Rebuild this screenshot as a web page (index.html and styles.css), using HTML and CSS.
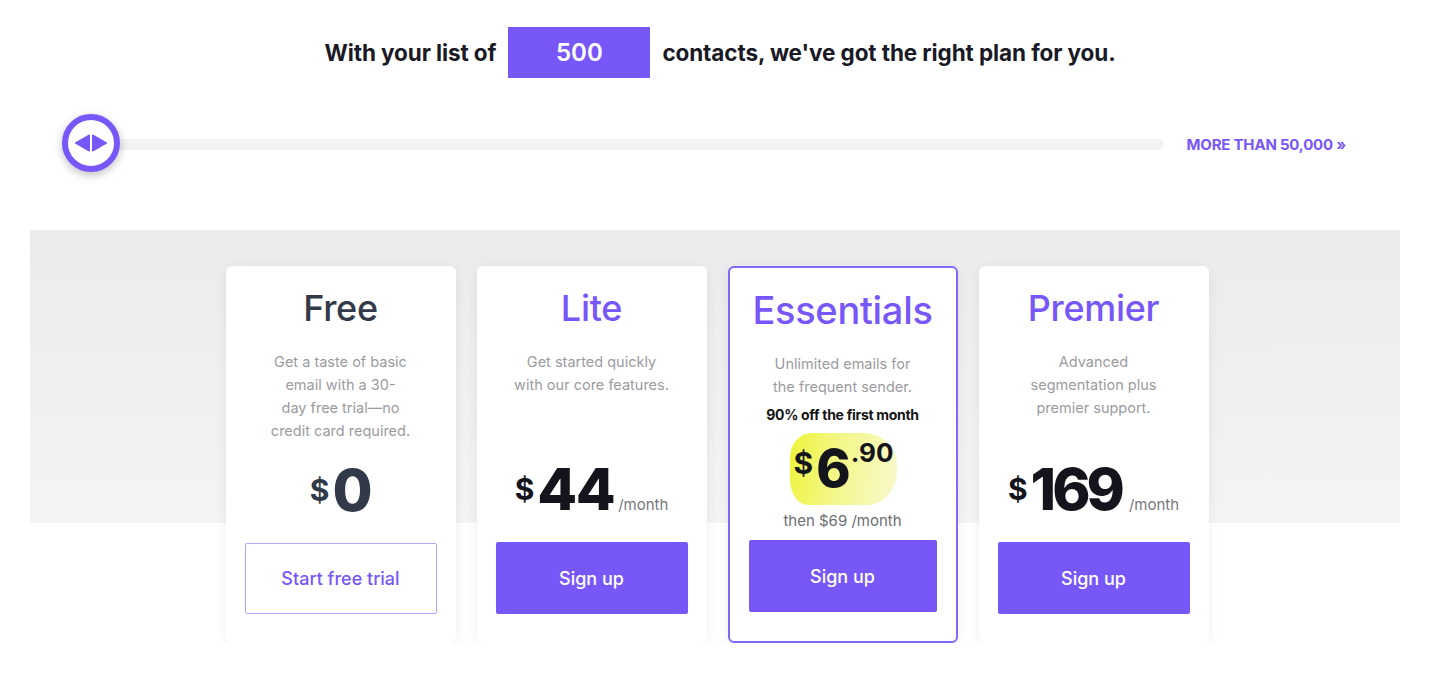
FILE: index.html
```html
<!DOCTYPE html>
<html lang="en">
<head>
    <meta charset="UTF-8">
    <meta name="viewport" content="width=device-width, initial-scale=1.0">
    <title>Pricing | Plans</title>
    <link rel="stylesheet" href="styles.css">
</head>
<body>
    <div class="picker">
        <h1 class="contacts">
            <span>With your list of</span>
            <span class="count">500</span>
            <span>contacts, we've got the right plan for you.</span>
        </h1>
        <div class="slider">
            <div class="knob">
                <svg width="46" height="46" viewBox="0 0 46 46">
                    <path d="M8 23 L21 15.5 L21 30.5 Z" fill="#7857f8" stroke="#7857f8" stroke-width="2" stroke-linejoin="round"/>
                    <path d="M25 15.5 L38 23 L25 30.5 Z" fill="#7857f8" stroke="#7857f8" stroke-width="2" stroke-linejoin="round"/>
                </svg>
            </div>
            <div class="track"></div>
            <a href="#" class="more">MORE THAN 50,000 &raquo;</a>
        </div>
    </div>

    <section class="plans">
        <div class="plan-row">
            <div class="plan">
                <h2 class="plan-name free">Free</h2>
                <p class="plan-desc">Get a taste of basic<br>email with a 30-<br>day free trial—no<br>credit card required.</p>
                <div class="price">
                    <span class="cur">$</span><span class="amount">0</span>
                </div>
                <a href="#" class="btn btn-outline">Start free trial</a>
            </div>
            <div class="plan">
                <h2 class="plan-name">Lite</h2>
                <p class="plan-desc">Get started quickly<br>with our core features.</p>
                <div class="price">
                    <span class="cur">$</span><span class="amount">44</span><span class="per">/month</span>
                </div>
                <a href="#" class="btn">Sign up</a>
            </div>
            <div class="plan featured">
                <h2 class="plan-name">Essentials</h2>
                <p class="plan-desc">Unlimited emails for<br>the frequent sender.</p>
                <p class="promo">90% off the first month</p>
                <div class="promo-price">
                    <span class="blob"><span class="cur">$</span><span class="amount">6</span><span class="cents">.90</span></span>
                </div>
                <p class="then">then $69 /month</p>
                <a href="#" class="btn">Sign up</a>
            </div>
            <div class="plan">
                <h2 class="plan-name">Premier</h2>
                <p class="plan-desc">Advanced<br>segmentation plus<br>premier support.</p>
                <div class="price">
                    <span class="cur">$</span><span class="amount tight">169</span><span class="per">/month</span>
                </div>
                <a href="#" class="btn">Sign up</a>
            </div>
        </div>
    </section>
</body>
</html>
```

FILE: styles.css
```css
body {
    margin: 0;
    font-family: Inter, 'Noto Sans', Arial, sans-serif;
    background: #fff;
    color: #111;
}
.picker {
    padding-top: 27px;
}
.contacts {
    margin: 0;
    display: flex;
    justify-content: center;
    align-items: center;
    gap: 12px;
    font-size: 22.5px;
    font-weight: 700;
    letter-spacing: -0.1px;
    color: #1a1a26;
}
.count {
    width: 142px;
    height: 51px;
    background: #7857f8;
    color: #fff;
    font-size: 24px;
    font-weight: 600;
    display: flex;
    align-items: center;
    justify-content: center;
    letter-spacing: 0;
}
.slider {
    display: flex;
    align-items: center;
    margin-top: 36px;
    padding: 0 94px 0 62px;
}
.knob {
    width: 46px;
    height: 46px;
    border: 6px solid #7857f8;
    border-radius: 50%;
    background: #fff;
    box-shadow: 0 3px 8px rgba(0, 0, 0, 0.25);
    flex-shrink: 0;
    position: relative;
    z-index: 1;
}
.knob svg {
    display: block;
}
.track {
    flex: 1;
    height: 11px;
    background: #f3f3f4;
    border-radius: 0 6px 6px 0;
    margin-top: 2px;
}
.more {
    margin-left: 23px;
    color: #7857f8;
    font-size: 15px;
    font-weight: 700;
    letter-spacing: -0.2px;
    text-decoration: none;
    margin-top: 2px;
}
.plans {
    margin: 58px 40px 0 30px;
    padding-top: 36px;
    background: linear-gradient(#ebebec, #f4f4f5) no-repeat;
    background-size: 100% 293px;
}
.plan-row {
    display: flex;
    justify-content: center;
    gap: 21px;
    margin-left: 4px;
}
.plan {
    width: 230px;
    box-sizing: border-box;
    background: #fff;
    border-radius: 6px;
    box-shadow: 0 2px 12px rgba(0, 0, 0, 0.07);
    padding: 20px 19px 29px;
    display: flex;
    flex-direction: column;
    align-items: stretch;
    text-align: center;
}
.plan.featured {
    border: 2px solid #8466f8;
}
.plan-name {
    margin: 0;
    font-size: 36px;
    line-height: 44px;
    font-weight: 500;
    color: #7857f8;
    letter-spacing: -0.3px;
}
.plan-name.free {
    color: #323a4a;
}
.featured .plan-name {
    font-size: 38px;
}
.plan-desc {
    margin: 20px 0 0;
    font-size: 14.5px;
    line-height: 23px;
    color: #9b9b9f;
}
.price {
    margin-top: auto;
    height: 64px;
    display: flex;
    justify-content: center;
    align-items: baseline;
    color: #14141c;
}
.cur {
    font-size: 30px;
    font-weight: 700;
    align-self: flex-start;
    margin-top: 14px;
    margin-right: 3px;
}
.amount {
    font-size: 58px;
    line-height: 64px;
    font-weight: 800;
    letter-spacing: -1.5px;
}
.amount.tight {
    letter-spacing: -4px;
    margin-right: 4px;
}
.plan:first-child .amount, .plan:first-child .cur {
    color: #323a4a;
}
.per {
    font-size: 15px;
    color: #77777d;
    margin-left: 4px;
}
.promo {
    margin: 7px 0 0;
    font-size: 14px;
    line-height: 20px;
    font-weight: 700;
    letter-spacing: -0.3px;
    color: #151515;
}
.promo-price {
    margin-top: 8px;
    display: flex;
    justify-content: center;
}
.blob {
    display: flex;
    align-items: flex-start;
    height: 72px;
    padding: 0 4px 0 6px;
    margin-left: 2px;
    box-sizing: border-box;
    border-radius: 22px 34px 30px 18px / 24px 30px 34px 26px;
    background: linear-gradient(100deg, #eef43a 0%, #f4f78a 45%, #f9f9cf 100%);
    color: #14141c;
}
.blob .cur {
    margin-top: 12px;
    margin-left: -2px;
}
.blob .amount {
    font-size: 52px;
    line-height: 72px;
    letter-spacing: 0;
}
.cents {
    font-size: 26px;
    font-weight: 700;
    margin-top: 4px;
}
.then {
    margin: 6px 0 0;
    font-size: 15px;
    line-height: 20px;
    color: #6d6d72;
}
.btn {
    display: flex;
    align-items: center;
    justify-content: center;
    height: 72px;
    margin-top: 21px;
    background: #7857f8;
    color: #fff;
    font-size: 18px;
    font-weight: 500;
    text-decoration: none;
    border-radius: 2px;
}
.featured .btn {
    margin-top: 9px;
}
.btn-outline {
    background: #fff;
    color: #7857f8;
    border: 1px solid #b6a4fb;
    box-sizing: border-box;
    height: 71px;
}
```
